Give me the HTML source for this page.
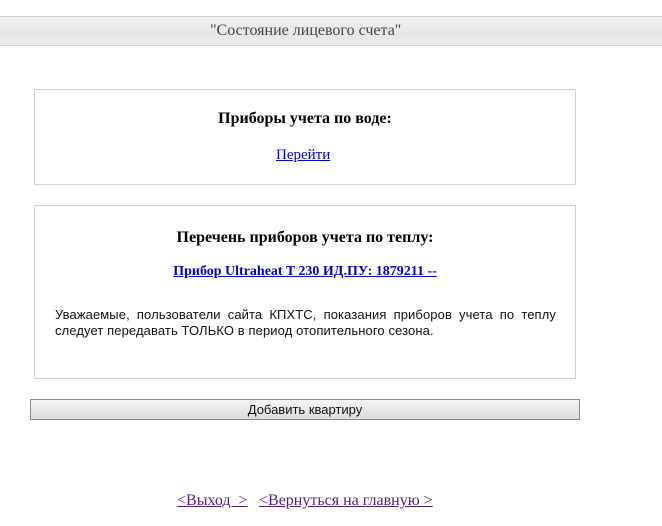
<!DOCTYPE html>
<html><head><meta charset="utf-8"><style>
body{margin:0;width:662px;height:526px;background:#fff;position:relative;font-family:"Liberation Serif",serif;overflow:hidden}
.hdr{position:absolute;left:0;top:16px;width:662px;height:28px;border-top:1px solid #d0d0d0;border-bottom:1px solid #d0d0d0;background:linear-gradient(#f2f2f2,#e6e6e6 60%,#ececec)}
.hdr span{position:absolute;left:210px;top:5px;font-size:16px;color:#444}
.box{position:absolute;left:34px;width:540px;border:1px solid #cfcfcf;text-align:center}
h3{margin:0;font-size:16px;font-weight:bold;color:#000;position:absolute;width:100%}
a{color:#0000cc;text-decoration:underline}
.p{position:absolute;left:20px;width:501px;font-family:"Liberation Sans",sans-serif;font-size:13px;letter-spacing:0.1px;text-align:justify;line-height:16px;color:#111}
.btn{position:absolute;left:30px;top:399px;width:548px;height:19px;border:1px solid #8a8a8a;background:linear-gradient(#f5f5f5,#dcdcdc);font-family:"Liberation Sans",sans-serif;font-size:13px;text-align:center;line-height:19px;color:#111}
.f{position:absolute;top:492px;font-size:16px;color:#551a8b;white-space:pre}
</style></head><body>
<div class="hdr"><span>"Состояние лицевого счета"</span></div>
<div class="box" style="top:89px;height:94px">
<h3 style="top:20px">Приборы учета по воде:</h3>
<a style="position:absolute;left:241px;top:57px;font-size:15px">Перейти</a>
</div>
<div class="box" style="top:205px;height:172px">
<h3 style="top:23px">Перечень приборов учета по теплу:</h3>
<a style="position:absolute;left:0;width:100%;top:58px;font-size:14px;font-weight:bold">Прибор Ultraheat T 230 ИД.ПУ: 1879211 --</a>
<div class="p" style="top:101px">Уважаемые, пользователи сайта КПХТС, показания приборов учета по теплу следует передавать ТОЛЬКО в период отопительного сезона.</div>
</div>
<div class="btn">Добавить квартиру</div>
<a class="f" style="left:177px;color:#551a8b">&lt;Выход  &gt;</a>
<a class="f" style="left:259px;color:#551a8b">&lt;Вернуться на главную &gt;</a>
</body></html>
